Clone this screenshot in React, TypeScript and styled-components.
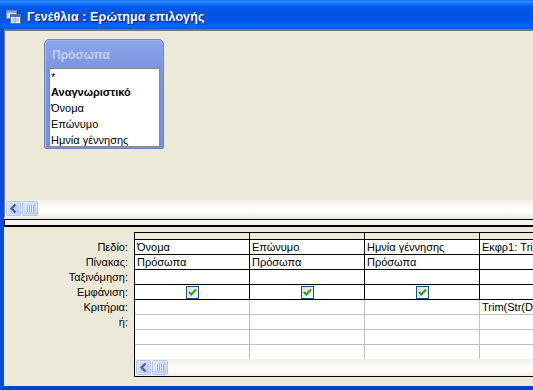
import React from "react";
import styled, { createGlobalStyle } from "styled-components";

const Global = createGlobalStyle`
  html, body { margin: 0; padding: 0; background: #ECE9D8; }
  body { font-family: "Liberation Sans", Arial, sans-serif; }
`;

const Window = styled.div`
  width: 533px;
  height: 390px;
  overflow: hidden;
  display: flex;
  flex-direction: column;
  font-family: "Liberation Sans", Arial, sans-serif;
  font-size: 11px;
  color: #000;
`;

const TitleBar = styled.div`
  height: 29px;
  flex: none;
  box-sizing: border-box;
  display: flex;
  align-items: center;
  gap: 6px;
  padding: 5px 0 0 6px;
  background: linear-gradient(
    to bottom,
    #0058ee 0px,
    #3a93ff 1px,
    #2a8aff 2px,
    #0a6ff8 4px,
    #0058e8 7px,
    #0054e3 14px,
    #0055ea 20px,
    #005ef6 24px,
    #0668fe 26px,
    #0060ee 28px,
    #0052d6 29px
  );
`;

const TitleText = styled.span`
  color: #fff;
  font-weight: bold;
  font-size: 12.5px;
  letter-spacing: 0.1px;
  text-shadow: 1px 1px 0 #0a1883;
  white-space: nowrap;
`;

const Frame = styled.div`
  flex: 1;
  min-height: 0;
  display: flex;
  border-left: 4px solid #0a4bda;
  border-bottom: 4px solid #0443cf;
`;

const Client = styled.div`
  flex: 1;
  min-width: 0;
  display: flex;
  flex-direction: column;
  overflow: hidden;
  background: #ece9d8;
`;

const UpperPane = styled.div`
  flex: none;
  display: flex;
  flex-direction: column;
  border-top: 2px solid #787878;
  border-left: 1px solid #787878;
`;

const Canvas = styled.div`
  height: 169px;
  box-sizing: border-box;
  padding: 8px 0 0 39px;
`;

const TableBox = styled.div`
  width: 120px;
  height: 110px;
  box-sizing: border-box;
  border: 1px solid #6a84d6;
  border-radius: 5px 5px 2px 2px;
  background: linear-gradient(to bottom, #8ea6ea, #7b94df 28px, #7891dd);
  box-shadow: inset 1px 1px 0 #a3b6ee;
  padding: 0 3px 1px 4px;
  display: flex;
  flex-direction: column;
`;

const TableTitle = styled.div`
  height: 28px;
  flex: none;
  box-sizing: border-box;
  padding: 2px 0 0 3px;
  line-height: 26px;
  font-size: 12px;
  font-weight: bold;
  color: #c3cef2;
`;

const ListBox = styled.div`
  flex: 1;
  box-sizing: border-box;
  border: 1px solid #8a8a8a;
  background: #fff;
  padding: 0.5px 0 0 1px;
  overflow: hidden;
`;

const ListItem = styled.div<{ $bold?: boolean }>`
  height: 15.75px;
  line-height: 15.75px;
  font-weight: ${(p) => (p.$bold ? "bold" : "normal")};
  white-space: nowrap;
`;

const HScroll = styled.div`
  height: 17px;
  flex: none;
  display: flex;
  align-items: center;
  background: linear-gradient(to bottom, #f1efe8, #fbfbf8 45%, #fefefe 70%, #efeee7);
`;

const ScrollBtn = styled.div`
  width: 15px;
  height: 15px;
  margin-left: 1px;
  box-sizing: border-box;
  border: 1px solid #b2c5f1;
  border-radius: 2px;
  background: linear-gradient(135deg, #e2eafe, #c3d3fb 50%, #b3c7f6);
  box-shadow: inset 0 0 0 1px rgba(255, 255, 255, 0.45);
  display: flex;
  align-items: center;
  justify-content: center;
`;

const Thumb = styled(ScrollBtn)`
  width: 16px;
`;

const Splitter = styled.div`
  height: 10px;
  flex: none;
  box-sizing: border-box;
  padding-top: 2px;
`;

const SplitterBar = styled.div`
  height: 8px;
  box-sizing: border-box;
  border-top: 1px solid #000;
  border-bottom: 2px solid #000;
  border-left: 1px solid #000;
  background: #f4f3ee;
`;

const LowerPane = styled.div`
  flex: 1;
  min-height: 0;
  display: flex;
  align-items: flex-start;
  padding-top: 5px;
`;

const LabelCol = styled.div`
  width: 130px;
  flex: none;
  box-sizing: border-box;
  padding: 8px 6px 0 0;
  display: flex;
  flex-direction: column;
  align-items: flex-end;
`;

const Label = styled.div`
  height: 15px;
  line-height: 15px;
  white-space: nowrap;
`;

const GridBox = styled.div`
  flex: 1;
  min-width: 0;
  height: 145px;
  box-sizing: border-box;
  border: 1px solid #000;
  border-right: none;
  overflow: hidden;
  display: flex;
  flex-direction: column;
  background: #fff;
`;

const GridBody = styled.div`
  flex: none;
  height: 126px;
  display: grid;
  grid-template-columns: repeat(4, 115px);
  grid-auto-rows: auto;
  align-content: start;
`;

type Line = "dark" | "light" | "none";
const lineColor = (l: Line) => (l === "dark" ? "#000" : l === "light" ? "#c0c0c0" : "transparent");

const HeadCell = styled.div`
  height: 7px;
  box-sizing: border-box;
  background: #ece9d8;
  border-right: 1px solid #000;
  border-bottom: 1px solid #000;
`;

const Cell = styled.div<{ $h: Line; $v: Line; $tall?: boolean }>`
  height: ${(p) => (p.$h === "none" ? "14px" : "15px")};
  box-sizing: border-box;
  border-right: 1px solid ${(p) => lineColor(p.$v)};
  border-bottom: ${(p) => (p.$h === "none" ? "0" : `1px solid ${lineColor(p.$h)}`)};
  padding-left: 2px;
  line-height: 15px;
  white-space: nowrap;
  overflow: hidden;
  display: flex;
  align-items: center;
  justify-content: ${(p) => (p.$tall ? "center" : "flex-start")};
`;

const CheckBox = styled.div`
  width: 13px;
  height: 13px;
  box-sizing: border-box;
  border: 1px solid #1c5180;
  background: linear-gradient(135deg, #dcdcd7, #ffffff);
  display: flex;
  align-items: center;
  justify-content: center;
  margin-left: -2px;
`;

const Chevron = () => (
  <svg width="9" height="11" viewBox="0 0 9 11">
    <polyline points="6.5,1.5 2.5,5.5 6.5,9.5" fill="none" stroke="#4d6185" strokeWidth="2.2" />
  </svg>
);

const Grip = () => (
  <svg width="8" height="7" viewBox="0 0 8 7">
    {[0, 2, 4, 6].map((x) => (
      <g key={x}>
        <rect x={x} y={0} width={1} height={7} fill="#eef4fe" />
        <rect x={x + 1} y={0} width={1} height={7} fill="#8cb0f8" />
      </g>
    ))}
  </svg>
);

const Check = () => (
  <svg width="9" height="9" viewBox="0 0 9 9">
    <polyline points="1,4 3.3,6.5 8,1.5" fill="none" stroke="#21a121" strokeWidth="2" />
  </svg>
);

const QueryIcon = () => (
  <svg width="15" height="14" viewBox="0 0 15 14">
    <rect x="0.5" y="0.5" width="10" height="8" fill="#dfe7f7" stroke="#6f86b8" />
    <rect x="1" y="1" width="9" height="2" fill="#8aa4d8" />
    <rect x="4.5" y="4.5" width="10" height="9" fill="#ffffff" stroke="#5a76b0" />
    <rect x="5" y="5" width="9" height="2" fill="#3c6ed8" />
    <line x1="6" y1="9" x2="13" y2="9" stroke="#8da0c8" />
    <line x1="6" y1="11" x2="13" y2="11" stroke="#8da0c8" />
    <line x1="9" y1="7" x2="9" y2="13" stroke="#8da0c8" />
  </svg>
);

const ScrollBar = () => (
  <HScroll>
    <ScrollBtn>
      <Chevron />
    </ScrollBtn>
    <Thumb>
      <Grip />
    </Thumb>
  </HScroll>
);

type Row = { kind: "text" | "check"; values: (string | boolean)[]; h: Line; v: Line };

const rows: Row[] = [
  { kind: "text", values: ["Όνομα", "Επώνυμο", "Ημνία γέννησης", "Εκφρ1: Trim(Str(Day([Ημνία γέννησης])))"], h: "dark", v: "dark" },
  { kind: "text", values: ["Πρόσωπα", "Πρόσωπα", "Πρόσωπα", ""], h: "dark", v: "dark" },
  { kind: "text", values: ["", "", "", ""], h: "dark", v: "dark" },
  { kind: "check", values: [true, true, true, false], h: "dark", v: "dark" },
  { kind: "text", values: ["", "", "", "Trim(Str(Day(Date())))"], h: "light", v: "light" },
  { kind: "text", values: ["", "", "", ""], h: "light", v: "light" },
  { kind: "text", values: ["", "", "", ""], h: "light", v: "light" },
  { kind: "text", values: ["", "", "", ""], h: "none", v: "light" },
];

const labels = ["Πεδίο:", "Πίνακας:", "Ταξινόμηση:", "Εμφάνιση:", "Κριτήρια:", "ή:"];
const fields = ["*", "Αναγνωριστικό", "Όνομα", "Επώνυμο", "Ημνία γέννησης"];

export default function App() {
  return (
    <>
      <Global />
      <Window>
        <TitleBar>
          <QueryIcon />
          <TitleText>Γενέθλια : Ερώτημα επιλογής</TitleText>
        </TitleBar>
        <Frame>
          <Client>
            <UpperPane>
              <Canvas>
                <TableBox>
                  <TableTitle>Πρόσωπα</TableTitle>
                  <ListBox>
                    {fields.map((f, i) => (
                      <ListItem key={f} $bold={i === 1}>
                        {f}
                      </ListItem>
                    ))}
                  </ListBox>
                </TableBox>
              </Canvas>
              <ScrollBar />
            </UpperPane>
            <Splitter>
              <SplitterBar />
            </Splitter>
            <LowerPane>
              <LabelCol>
                {labels.map((l) => (
                  <Label key={l}>{l}</Label>
                ))}
              </LabelCol>
              <GridBox>
                <GridBody>
                  {[0, 1, 2, 3].map((c) => (
                    <HeadCell key={`h${c}`} />
                  ))}
                  {rows.map((r, ri) =>
                    r.values.map((v, ci) => (
                      <Cell key={`${ri}-${ci}`} $h={r.h} $v={r.v} $tall={r.kind === "check"}>
                        {r.kind === "check" ? (
                          v ? (
                            <CheckBox>
                              <Check />
                            </CheckBox>
                          ) : null
                        ) : (
                          (v as string)
                        )}
                      </Cell>
                    ))
                  )}
                </GridBody>
                <ScrollBar />
              </GridBox>
            </LowerPane>
          </Client>
        </Frame>
      </Window>
    </>
  );
}
